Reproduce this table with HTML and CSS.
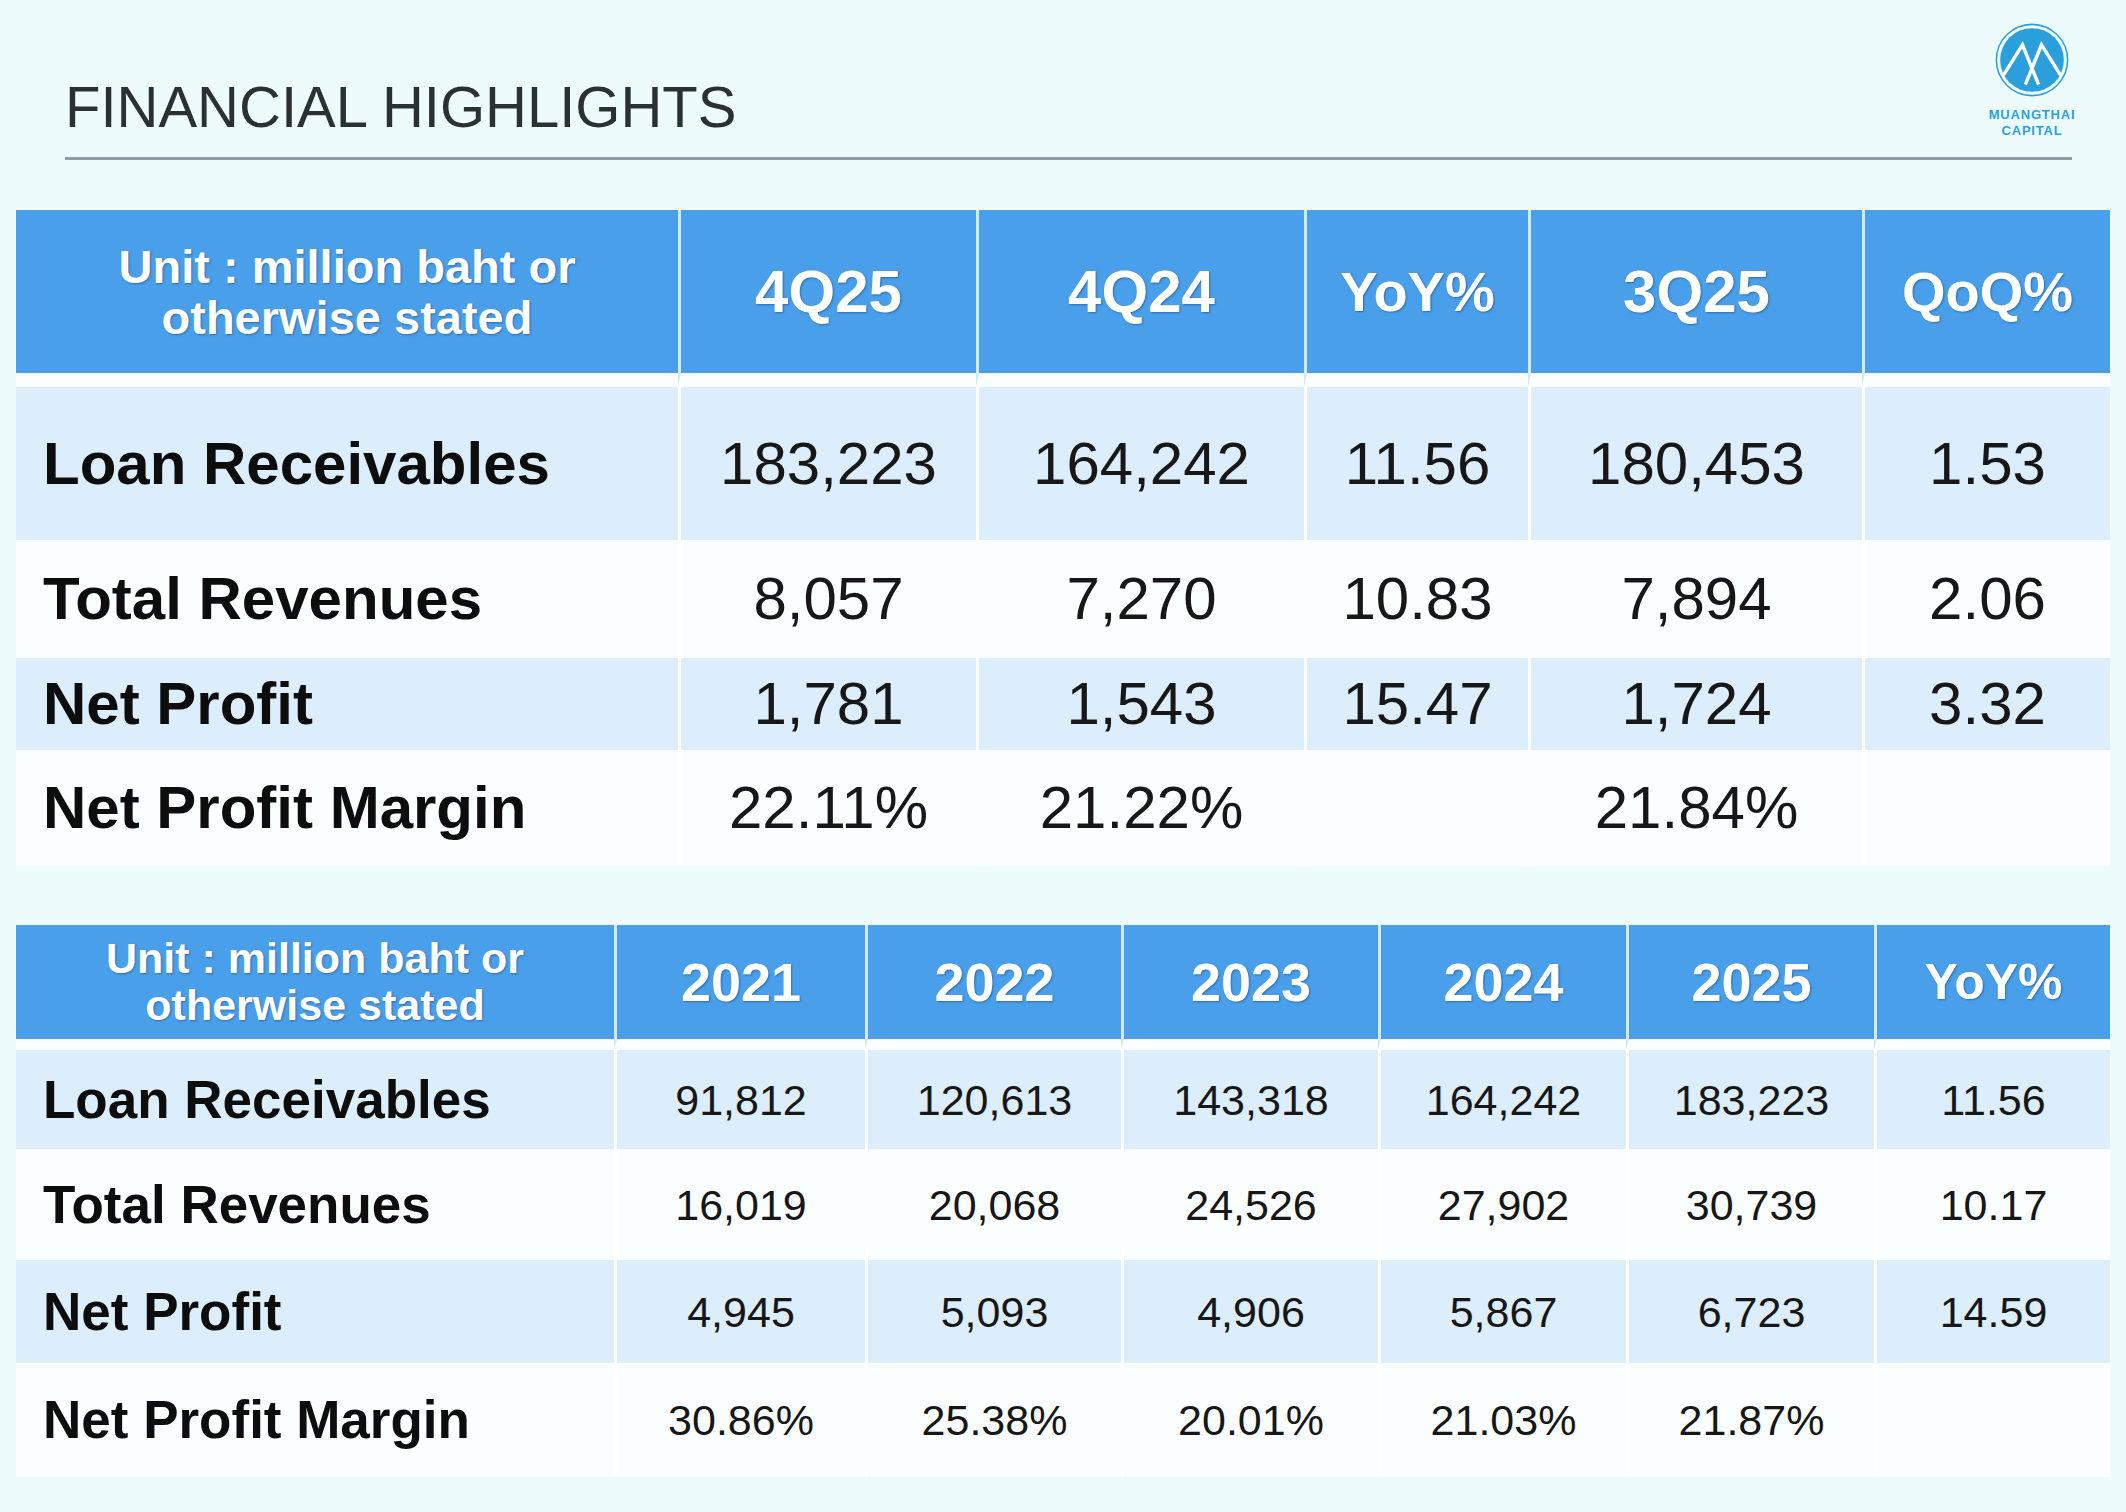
FILE: index.html
```html
<!DOCTYPE html>
<html lang="en">
<head>
<meta charset="utf-8">
<title>Financial Highlights</title>
<link rel="stylesheet" href="styles.css">
</head>
<body>
<div class="page">
  <header class="top">
    <h1 class="title">FINANCIAL HIGHLIGHTS</h1>
    <div class="logo">
      <svg class="logo-mark" viewBox="0 0 80 80" width="76" height="76">
        <circle cx="40" cy="40" r="37.5" fill="none" stroke="#2aa0dc" stroke-width="1.6"/>
        <circle cx="40" cy="40" r="33.5" fill="#2a9fdc"/>
        <path d="M10 56 L30 24 L47 66 M33 66 L50 24 L70 56" fill="none" stroke="#ffffff" stroke-width="3.6" stroke-linejoin="miter" stroke-linecap="butt"/>
      </svg>
      <div class="logo-name first">MUANGTHAI</div>
      <div class="logo-name">CAPITAL</div>
    </div>
  </header>

  <table class="fin fin-q">
    <colgroup>
      <col class="q-label"><col class="q-c1"><col class="q-c2"><col class="q-c3"><col class="q-c4"><col class="q-c5">
    </colgroup>
    <thead>
      <tr>
        <th class="unit">Unit : million baht or<br>otherwise stated</th>
        <th>4Q25</th>
        <th>4Q24</th>
        <th class="pct">YoY%</th>
        <th>3Q25</th>
        <th class="pct">QoQ%</th>
      </tr>
    </thead>
    <tbody>
      <tr class="alt r1">
        <td class="label">Loan Receivables</td><td>183,223</td><td>164,242</td><td>11.56</td><td>180,453</td><td>1.53</td>
      </tr>
      <tr class="r2">
        <td class="label">Total Revenues</td><td>8,057</td><td>7,270</td><td>10.83</td><td>7,894</td><td>2.06</td>
      </tr>
      <tr class="alt r3">
        <td class="label">Net Profit</td><td>1,781</td><td>1,543</td><td>15.47</td><td>1,724</td><td>3.32</td>
      </tr>
      <tr class="r4">
        <td class="label">Net Profit Margin</td><td>22.11%</td><td>21.22%</td><td></td><td>21.84%</td><td></td>
      </tr>
    </tbody>
  </table>

  <table class="fin fin-y">
    <colgroup>
      <col class="y-label"><col class="y-c1"><col class="y-c2"><col class="y-c3"><col class="y-c4"><col class="y-c5"><col class="y-c6">
    </colgroup>
    <thead>
      <tr>
        <th class="unit">Unit : million baht or<br>otherwise stated</th>
        <th>2021</th>
        <th>2022</th>
        <th>2023</th>
        <th>2024</th>
        <th>2025</th>
        <th class="pct">YoY%</th>
      </tr>
    </thead>
    <tbody>
      <tr class="alt r1">
        <td class="label">Loan Receivables</td><td>91,812</td><td>120,613</td><td>143,318</td><td>164,242</td><td>183,223</td><td>11.56</td>
      </tr>
      <tr class="r2">
        <td class="label">Total Revenues</td><td>16,019</td><td>20,068</td><td>24,526</td><td>27,902</td><td>30,739</td><td>10.17</td>
      </tr>
      <tr class="alt r3">
        <td class="label">Net Profit</td><td>4,945</td><td>5,093</td><td>4,906</td><td>5,867</td><td>6,723</td><td>14.59</td>
      </tr>
      <tr class="r4">
        <td class="label">Net Profit Margin</td><td>30.86%</td><td>25.38%</td><td>20.01%</td><td>21.03%</td><td>21.87%</td><td></td>
      </tr>
    </tbody>
  </table>
</div>
</body>
</html>
```

FILE: styles.css
```css
* { box-sizing: border-box; }

body {
  margin: 0;
  background: #eefbfd;
  font-family: "Liberation Sans", Arial, sans-serif;
}

.page {
  width: 2126px;
  padding: 0 16px;
}

/* ---------- header ---------- */
.top {
  display: flex;
  justify-content: space-between;
  align-items: flex-end;
  height: 160px;
  margin: 0 38px 50px 49px;
  border-bottom: 3px solid #8d9ea5;
}

.title {
  margin: 0 0 15px 0;
  font-size: 58px;
  font-weight: 400;
  line-height: 70px;
  color: #2b3035;
}

.logo {
  width: 80px;
  margin-bottom: 18px;
  display: flex;
  flex-direction: column;
  align-items: center;
}

.logo-mark { display: block; }

.logo-name {
  font-size: 13px;
  font-weight: 700;
  line-height: 16px;
  letter-spacing: 0.8px;
  color: #2aa3dc;
  white-space: nowrap;
}

.logo-name.first { margin-top: 9px; }

/* ---------- tables ---------- */
.fin {
  width: 2094px;
  table-layout: fixed;
  border-collapse: separate;
  border-spacing: 0;
  background: #fbfeff;
}

.fin th,
.fin td {
  padding: 0;
  text-align: center;
  vertical-align: middle;
  border-left: 3px solid #ffffff;
}

.fin th:first-child,
.fin td:first-child { border-left: 0; }

.fin th {
  background: #4a9fea;
  color: #ffffff;
  font-weight: 700;
  text-shadow: 1px 1px 2px rgba(10, 50, 100, 0.45);
  border-left-color: #d3e9fa;
  border-bottom-style: solid;
  border-bottom-color: #fbfeff;
}

.fin td {
  color: #171717;
  font-weight: 400;
}

.fin .alt td { background: #dcedfb; }

.fin td.label {
  text-align: left;
  font-weight: 700;
  color: #0d0d0d;
  padding-left: 27px;
}

/* quarterly table */
.fin-q { margin-bottom: 59px; }

.q-label { width: 662px; }
.q-c1 { width: 298px; }
.q-c2 { width: 328px; }
.q-c3 { width: 224px; }
.q-c4 { width: 334px; }
.q-c5 { width: 248px; }

.fin-q th {
  height: 177px;
  border-bottom-width: 14px;
  font-size: 60px;
  line-height: 70px;
}

.fin-q th.pct { font-size: 56px; }

.fin-q th.unit {
  font-size: 47px;
  line-height: 51px;
}

.fin-q td {
  font-size: 60px;
  line-height: 70px;
}

.fin-q .r1 td { height: 153px; }
.fin-q .r2 td { height: 118px; }
.fin-q .r3 td { height: 92px; }
.fin-q .r4 td { height: 116px; }

/* yearly table */
.y-label { width: 598px; }
.y-c1 { width: 251px; }
.y-c2 { width: 256px; }
.y-c3 { width: 257px; }
.y-c4 { width: 248px; }
.y-c5 { width: 248px; }
.y-c6 { width: 236px; }

.fin-y th {
  height: 125px;
  border-bottom-width: 11px;
  font-size: 54px;
  line-height: 60px;
}

.fin-y th.pct { font-size: 50px; }

.fin-y th.unit {
  font-size: 43px;
  line-height: 47px;
}

.fin-y td {
  font-size: 43px;
  line-height: 52px;
}

.fin-y td.label { font-size: 53px; }

.fin-y .r1 td { height: 99px; }
.fin-y .r2 td { height: 111px; }
.fin-y .r3 td { height: 103px; }
.fin-y .r4 td { height: 114px; }
```
